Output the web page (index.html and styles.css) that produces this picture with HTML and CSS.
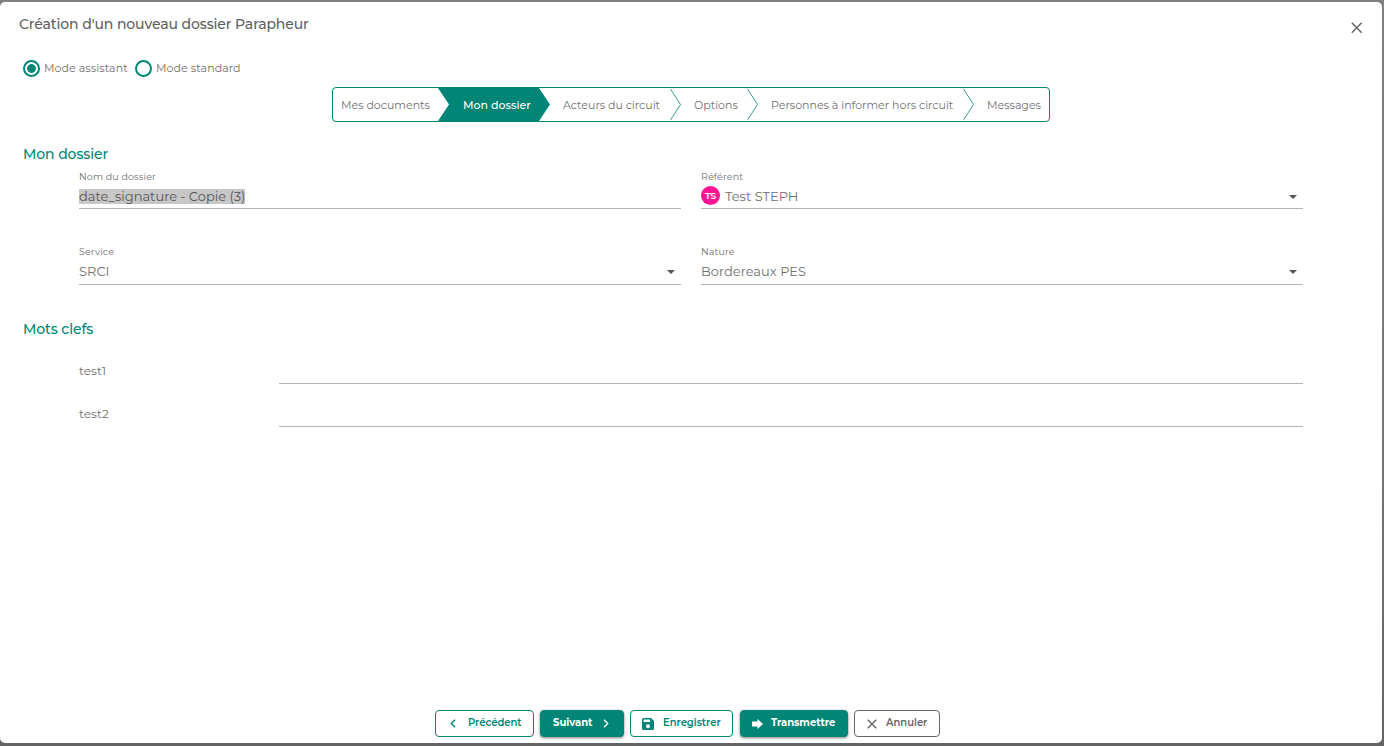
FILE: index.html
```html
<!DOCTYPE html>
<html lang="fr">
<head>
  <meta charset="UTF-8" />
  <meta name="viewport" content="width=device-width, initial-scale=1.0" />
  <title>Création d'un nouveau dossier Parapheur</title>
  <link rel="stylesheet" href="styles.css">
</head>
<body>
  <main class="dialog" role="dialog" aria-labelledby="dialogTitle">
    <header class="dialog-header">
      <h1 id="dialogTitle">Création d'un nouveau dossier Parapheur</h1>
      <button class="close" aria-label="Fermer">
        <svg width="12" height="12" viewBox="0 0 12 12"><path d="M.8 .8l9.900 9.900M10.700 .8L.8 10.700" /></svg>
      </button>
    </header>

    <div class="modes" role="radiogroup" aria-label="Mode">
      <span class="radio checked" role="radio" aria-checked="true"></span>
      <span class="mode-label">Mode assistant</span>
      <span class="radio" role="radio" aria-checked="false"></span>
      <span class="mode-label">Mode standard</span>
    </div>

    <nav class="steps">
      <div class="step step-documents"><span>Mes documents</span></div>
      <div class="step step-dossier active"><span>Mon dossier</span></div>
      <div class="step step-acteurs"><span>Acteurs du circuit</span></div>
      <div class="step step-options">
        <svg class="chevron" width="12" height="33" viewBox="0 0 12 33"><path d="M.5 1l10 15.500l-10 15.500" /></svg>
        <span>Options</span>
      </div>
      <div class="step step-personnes">
        <svg class="chevron" width="12" height="33" viewBox="0 0 12 33"><path d="M.5 1l10 15.500l-10 15.500" /></svg>
        <span>Personnes à informer hors circuit</span>
      </div>
      <div class="step step-messages">
        <svg class="chevron" width="12" height="33" viewBox="0 0 12 33"><path d="M.5 1l10 15.500l-10 15.500" /></svg>
        <span>Messages</span>
      </div>
    </nav>

    <section class="dossier">
      <h2>Mon dossier</h2>
      <div class="fields">
        <div class="field">
          <label>Nom du dossier</label>
          <div class="value"><span class="selected">date_signature - Copie (3)</span></div>
        </div>
        <div class="field">
          <label>Référent</label>
          <div class="value"><span class="avatar">TS</span><span>Test STEPH</span><i class="arrow"></i></div>
        </div>
        <div class="field">
          <label>Service</label>
          <div class="value"><span>SRCI</span><i class="arrow"></i></div>
        </div>
        <div class="field">
          <label>Nature</label>
          <div class="value"><span>Bordereaux PES</span><i class="arrow"></i></div>
        </div>
      </div>
    </section>

    <section class="keywords">
      <h2>Mots clefs</h2>
      <div class="keyword"><label>test1</label><div class="line"></div></div>
      <div class="keyword"><label>test2</label><div class="line"></div></div>
    </section>

    <footer class="actions">
      <button class="btn btn-previous">
        <svg width="6" height="9" viewBox="0 0 6 9"><path class="stroke" d="M5 .8L1.300 4.500L5 8.200" /></svg>
        <span>Précédent</span>
      </button>
      <button class="btn btn-next primary">
        <span>Suivant</span>
        <svg width="6" height="9" viewBox="0 0 6 9"><path class="stroke" d="M1 .8L4.700 4.500L1 8.200" /></svg>
      </button>
      <button class="btn btn-save">
        <svg width="12" height="12" viewBox="0 0 12 12"><path fill-rule="evenodd" d="M1.500 0H9L12 3V10.500Q12 12 10.500 12H1.500Q0 12 0 10.500V1.500Q0 0 1.500 0ZM1.500 1.500V4H8V1.500ZM6 6.200A2 2 0 1 0 6 10.200A2 2 0 1 0 6 6.200Z" /></svg>
        <span>Enregistrer</span>
      </button>
      <button class="btn btn-send primary">
        <svg width="11" height="10" viewBox="0 0 11 10"><path d="M0 2.500H5.500V0L11 5L5.500 10V7.500H0Z" /></svg>
        <span>Transmettre</span>
      </button>
      <button class="btn btn-cancel">
        <svg width="10" height="10" viewBox="0 0 10 10"><path class="stroke" d="M.7 .7l8.600 8.600M9.300 .7L.7 9.300" /></svg>
        <span>Annuler</span>
      </button>
    </footer>
  </main>
</body>
</html>
```
FILE: styles.css
```css
:root {
  --green: #008577;
  --text: #707070;
  --line: #b3b3b3;
}

* {
  box-sizing: border-box;
}

body {
  margin: 0;
  height: 746px;
  padding: 2px 2px 3px 0;
  overflow: hidden;
  background: linear-gradient(#808080, #787878 50%, #646464);
  font-family: Montserrat, Inter, sans-serif;
  color: var(--text);
}

.dialog {
  display: flex;
  flex-direction: column;
  height: 741px;
  background: #fff;
  border-radius: 5px;
}

.dialog span,
.dialog label {
  white-space: nowrap;
}

.dialog-header {
  display: flex;
  justify-content: space-between;
  height: 56px;
  padding: 13px 19px 0;
}

h1 {
  margin: 0;
  font-size: 14px;
  line-height: 18px;
  font-weight: 500;
  letter-spacing: -0.11px;
  color: #606060;
}

.close {
  display: flex;
  height: 12px;
  margin-top: 7px;
  padding: 0;
  border: 0;
  background: none;
}

.close path {
  stroke: #666;
  stroke-width: 1.5;
}

.modes {
  display: flex;
  align-items: center;
  height: 20px;
  padding-left: 23px;
  font-size: 11px;
}

.radio {
  width: 17px;
  height: 17px;
  border: 2px solid var(--green);
  border-radius: 50%;
}

.radio.checked {
  background: radial-gradient(circle, var(--green) 4px, #fff 4.7px);
}

.mode-label {
  width: 91px;
  margin-left: 4px;
  letter-spacing: 0.08px;
}

.steps {
  display: flex;
  width: 718px;
  height: 35px;
  margin: 9px 0 0 332px;
  border: 1px solid var(--green);
  border-radius: 4px;
  font-size: 11px;
}

.step {
  display: flex;
  align-items: center;
}

.step-documents {
  width: 105px;
  padding-left: 8px;
}

.step-dossier {
  width: 112px;
  margin-right: -11px;
  padding-left: 25px;
}

.step.active {
  background: var(--green);
  color: #fff;
  font-weight: 500;
  clip-path: polygon(0 0, 101px 0, 112px 50%, 101px 100%, 0 100%, 11px 50%);
}

.step-acteurs {
  width: 131px;
  padding-left: 24px;
}

.step-options {
  width: 77px;
}

.step-personnes {
  width: 216px;
}

.chevron {
  flex: none;
  margin-right: 12px;
}

.chevron path {
  fill: none;
  stroke: var(--green);
  stroke-width: 0.8;
}

h2 {
  margin: 0;
  font-size: 14px;
  line-height: 18px;
  font-weight: 500;
  letter-spacing: -0.1px;
  color: var(--green);
}

.dossier {
  margin-top: 23px;
  padding: 0 79px 0 23px;
}

.fields {
  display: grid;
  grid-template-columns: 602px 602px;
  grid-template-rows: 39px 40px;
  column-gap: 20px;
  row-gap: 36px;
  margin: 7px 0 0 56px;
}

.field {
  border-bottom: 1px solid var(--line);
}

.field label {
  display: block;
  font-size: 9.5px;
  line-height: 14px;
  letter-spacing: 0.12px;
}

.value {
  display: flex;
  align-items: center;
  height: 20px;
  margin-top: 2px;
  font-size: 13px;
  line-height: 15px;
}

.selected {
  background: #c7c7c7;
  color: #555;
}

.avatar {
  width: 19px;
  height: 19px;
  margin: -2px 5px 0 0;
  border-radius: 50%;
  background: #ff1493;
  color: #fff;
  font-size: 9.5px;
  font-weight: 600;
  letter-spacing: -0.3px;
  line-height: 19px;
  text-align: center;
}

.arrow {
  margin: 1px 6px 0 auto;
  border: 4px solid transparent;
  border-top-color: #555;
  border-bottom: 0;
}

.keywords {
  margin-top: 35px;
  padding: 0 79px 0 23px;
}

.keyword {
  display: flex;
  height: 43px;
  margin-left: 56px;
}

.keywords h2 {
  margin-bottom: 3px;
}

.keyword label {
  width: 200px;
  padding-top: 22px;
  font-size: 12px;
  line-height: 16px;
  letter-spacing: 0.1px;
}

.line {
  width: 1024px;
  border-bottom: 1px solid var(--line);
}

.actions {
  display: flex;
  gap: 6px;
  margin: auto 0 6px 435px;
}

.btn {
  display: flex;
  align-items: center;
  height: 27px;
  padding: 0 0 2px;
  border: 1px solid var(--green);
  border-radius: 4px;
  background: #fff;
  color: var(--green);
  font-family: inherit;
  font-size: 10px;
  font-weight: 600;
}

.btn svg {
  flex: none;
  position: relative;
  top: 1px;
  fill: currentColor;
}

.btn .stroke {
  fill: none;
  stroke: currentColor;
  stroke-width: 1.4;
}

.btn.primary {
  background: var(--green);
  color: #fff;
  font-weight: 700;
  box-shadow: 0 1px 3px rgba(0, 0, 0, 0.5);
}

.btn-previous {
  width: 99px;
  padding-left: 14px;
  gap: 12px;
}

.btn-next {
  width: 84px;
  padding-left: 12px;
  padding-right: 14px;
  justify-content: space-between;
}

.btn-save {
  width: 103px;
  padding-left: 11px;
  gap: 9px;
}

.btn-send {
  width: 108px;
  margin-left: 1px;
  padding-left: 11px;
  gap: 8px;
}

.btn-cancel {
  width: 86px;
  padding-left: 12px;
  gap: 9px;
  border-color: #666;
  color: #666;
}
```
